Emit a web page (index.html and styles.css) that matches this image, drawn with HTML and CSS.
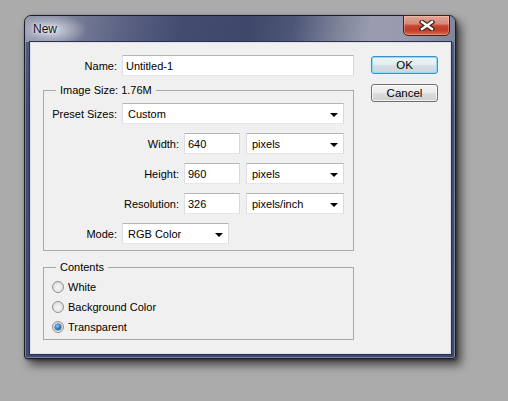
FILE: index.html
```html
<!DOCTYPE html>
<html>
<head>
<meta charset="utf-8">
<link rel="stylesheet" href="styles.css">
</head>
<body>
<div class="window">
  <div class="titlebar">
    <span class="title">New</span>
    <div class="close">
      <svg width="16" height="11" viewBox="0 0 16 11">
        <path d="M3 2 L13 9 M13 2 L3 9" stroke="#3a211c" stroke-width="4.6" stroke-linecap="square" fill="none"/>
        <path d="M3 2 L13 9 M13 2 L3 9" stroke="#ffffff" stroke-width="2.4" stroke-linecap="square" fill="none"/>
      </svg>
    </div>
  </div>
  <div class="client">
    <div class="main">
      <div class="row name-row">
        <span class="lbl">Name:</span>
        <div class="input w-name">Untitled-1</div>
      </div>
      <fieldset class="group g-size">
        <legend>Image Size: 1.76M</legend>
        <div class="row">
          <span class="lbl lbl-a">Preset Sizes:</span>
          <div class="select w-preset"><span>Custom</span><i class="arrow"></i></div>
        </div>
        <div class="row">
          <span class="lbl lbl-b">Width:</span>
          <div class="input w-num">640</div>
          <div class="select w-unit"><span>pixels</span><i class="arrow"></i></div>
        </div>
        <div class="row">
          <span class="lbl lbl-b">Height:</span>
          <div class="input w-num">960</div>
          <div class="select w-unit"><span>pixels</span><i class="arrow"></i></div>
        </div>
        <div class="row">
          <span class="lbl lbl-b">Resolution:</span>
          <div class="input w-num">326</div>
          <div class="select w-unit"><span>pixels/inch</span><i class="arrow"></i></div>
        </div>
        <div class="row">
          <span class="lbl lbl-a">Mode:</span>
          <div class="select w-mode"><span>RGB Color</span><i class="arrow"></i></div>
        </div>
      </fieldset>
      <fieldset class="group g-contents">
        <legend>Contents</legend>
        <div class="radio-row"><span class="radio"></span>White</div>
        <div class="radio-row"><span class="radio"></span>Background Color</div>
        <div class="radio-row"><span class="radio on"></span>Transparent</div>
      </fieldset>
    </div>
    <div class="buttons">
      <button class="btn btn-ok">OK</button>
      <button class="btn">Cancel</button>
    </div>
  </div>
</div>
</body>
</html>
```

FILE: styles.css
```css
html, body {
  margin: 0;
  padding: 0;
}
body {
  width: 508px;
  height: 401px;
  overflow: hidden;
  background: #ababab;
  font-family: "Liberation Sans", Arial, sans-serif;
  font-size: 11px;
  color: #000;
}
.window {
  box-sizing: border-box;
  width: 432px;
  height: 344px;
  margin: 15px 0 0 24px;
  border: 1px solid #1b1e28;
  border-radius: 7px 7px 3px 3px;
  background: linear-gradient(180deg, #5a6284 0%, #434d72 25%, #3f4970 100%);
  box-shadow: 5px 6px 10px rgba(0, 0, 0, 0.6), 1px 1px 3px rgba(0, 0, 0, 0.45), inset 0 0 0 1px rgba(190, 198, 222, 0.45);
  display: flex;
  flex-direction: column;
}
.titlebar {
  height: 26px;
  flex: none;
  display: flex;
  align-items: flex-start;
  border-radius: 6px 6px 0 0;
  background:
    radial-gradient(ellipse 34px 16px at 28px 14px, rgba(222, 224, 234, 0.85), rgba(222, 224, 234, 0) 100%),
    linear-gradient(100deg, #989cb0 0%, #7b8199 10%, #5d6485 22%, #434d70 36%, #3e4869 52%, #4d5677 62%, #7c8198 72%, #9a9daf 80%, #979bad 88%, #7f8499 100%);
}
.title {
  font-size: 12px;
  line-height: 26px;
  padding-left: 8px;
  color: #111;
  text-shadow: 0 0 5px rgba(255, 255, 255, 0.9), 0 0 2px rgba(255, 255, 255, 0.8);
}
.close {
  box-sizing: border-box;
  width: 47px;
  height: 21px;
  margin: -1px 5px 0 auto;
  border: 1px solid #4a1f18;
  border-radius: 0 0 5px 5px;
  background: linear-gradient(#e3a597 0%, #d88a78 40%, #c44632 52%, #c03d28 75%, #d86a4e 100%);
  box-shadow: inset 0 0 0 1px rgba(255, 215, 205, 0.35);
  display: flex;
  align-items: center;
  justify-content: center;
}
.close svg {
  display: block;
  margin-top: -1px;
}
.client {
  flex: 1;
  box-sizing: border-box;
  margin: 0 4px 4px 5px;
  padding: 12px 0 0 12px;
  background: #f0f0f0;
  border: 1px solid #dde0e8;
  box-shadow: 0 0 0 1px #2b3250;
  display: flex;
  align-items: flex-start;
}
.main {
  width: 311px;
  flex: none;
}
.row {
  display: flex;
  align-items: center;
  height: 21px;
  gap: 5px;
}
.lbl {
  flex: none;
  text-align: right;
}
.name-row .lbl {
  width: 74px;
}
.lbl-a {
  width: 73px;
}
.lbl-b {
  width: 135px;
}
.input,
.select {
  box-sizing: border-box;
  height: 21px;
  background: #fff;
  border: 1px solid;
  border-color: #b3b5bb #d6d9df #e3e6ec #dcdee4;
  display: flex;
  align-items: center;
  flex: none;
}
.input {
  padding-left: 3px;
}
.select {
  padding: 0 5px;
  justify-content: space-between;
}
.arrow {
  width: 0;
  height: 0;
  border-left: 4px solid transparent;
  border-right: 4px solid transparent;
  border-top: 4px solid #000;
  margin-top: 2px;
}
.w-name {
  width: 232px;
}
.w-preset {
  width: 222px;
}
.w-num {
  width: 56px;
}
.w-unit {
  width: 98px;
  margin-left: 1px;
}
.w-mode {
  width: 107px;
}
.group {
  margin: 8px 0 0;
  padding: 6px 0;
  border: 1px solid #a8a8a8;
  min-width: 0;
}
.group legend {
  margin-left: 12px;
  padding: 0 4px;
  line-height: 13px;
}
.g-size .row + .row {
  margin-top: 9px;
}
.g-contents {
  margin-top: 10px;
  padding: 3px 0 2px;
}
.radio-row {
  display: flex;
  align-items: center;
  height: 20px;
  padding-left: 8px;
  gap: 4px;
}
.radio {
  box-sizing: border-box;
  width: 12px;
  height: 12px;
  border-radius: 50%;
  border: 1px solid #929292;
  background: radial-gradient(circle at 50% 55%, #f6f6f6 0%, #e6e6e6 55%, #cfcfcf 100%);
  display: grid;
  place-items: center;
  flex: none;
}
.radio.on::after {
  content: "";
  width: 6px;
  height: 6px;
  border-radius: 50%;
  background: radial-gradient(circle at 40% 35%, #8fd2fb 0%, #2d84cc 45%, #0c3f80 100%);
  box-shadow: 0 0 0 0.5px #16477e;
}
.buttons {
  flex: none;
  width: 67px;
  margin: 1px 0 0 17px;
  display: flex;
  flex-direction: column;
  gap: 10px;
}
.btn {
  box-sizing: border-box;
  height: 18px;
  padding: 0;
  border: 1px solid #707070;
  border-radius: 3px;
  background: linear-gradient(#f3f3f3 0%, #ececec 48%, #dddddd 52%, #cfcfcf 100%);
  box-shadow: inset 0 0 0 1px rgba(255, 255, 255, 0.7);
  font-family: inherit;
  font-size: 11.5px;
  color: #000;
  line-height: 16px;
}
.btn-ok {
  border-color: #3c8fc8;
  background: linear-gradient(#eef3f6 0%, #e5ecf0 48%, #d6dfe5 52%, #cbd5dc 100%);
  box-shadow: inset 0 0 0 1px #8fdcf7;
}
```
